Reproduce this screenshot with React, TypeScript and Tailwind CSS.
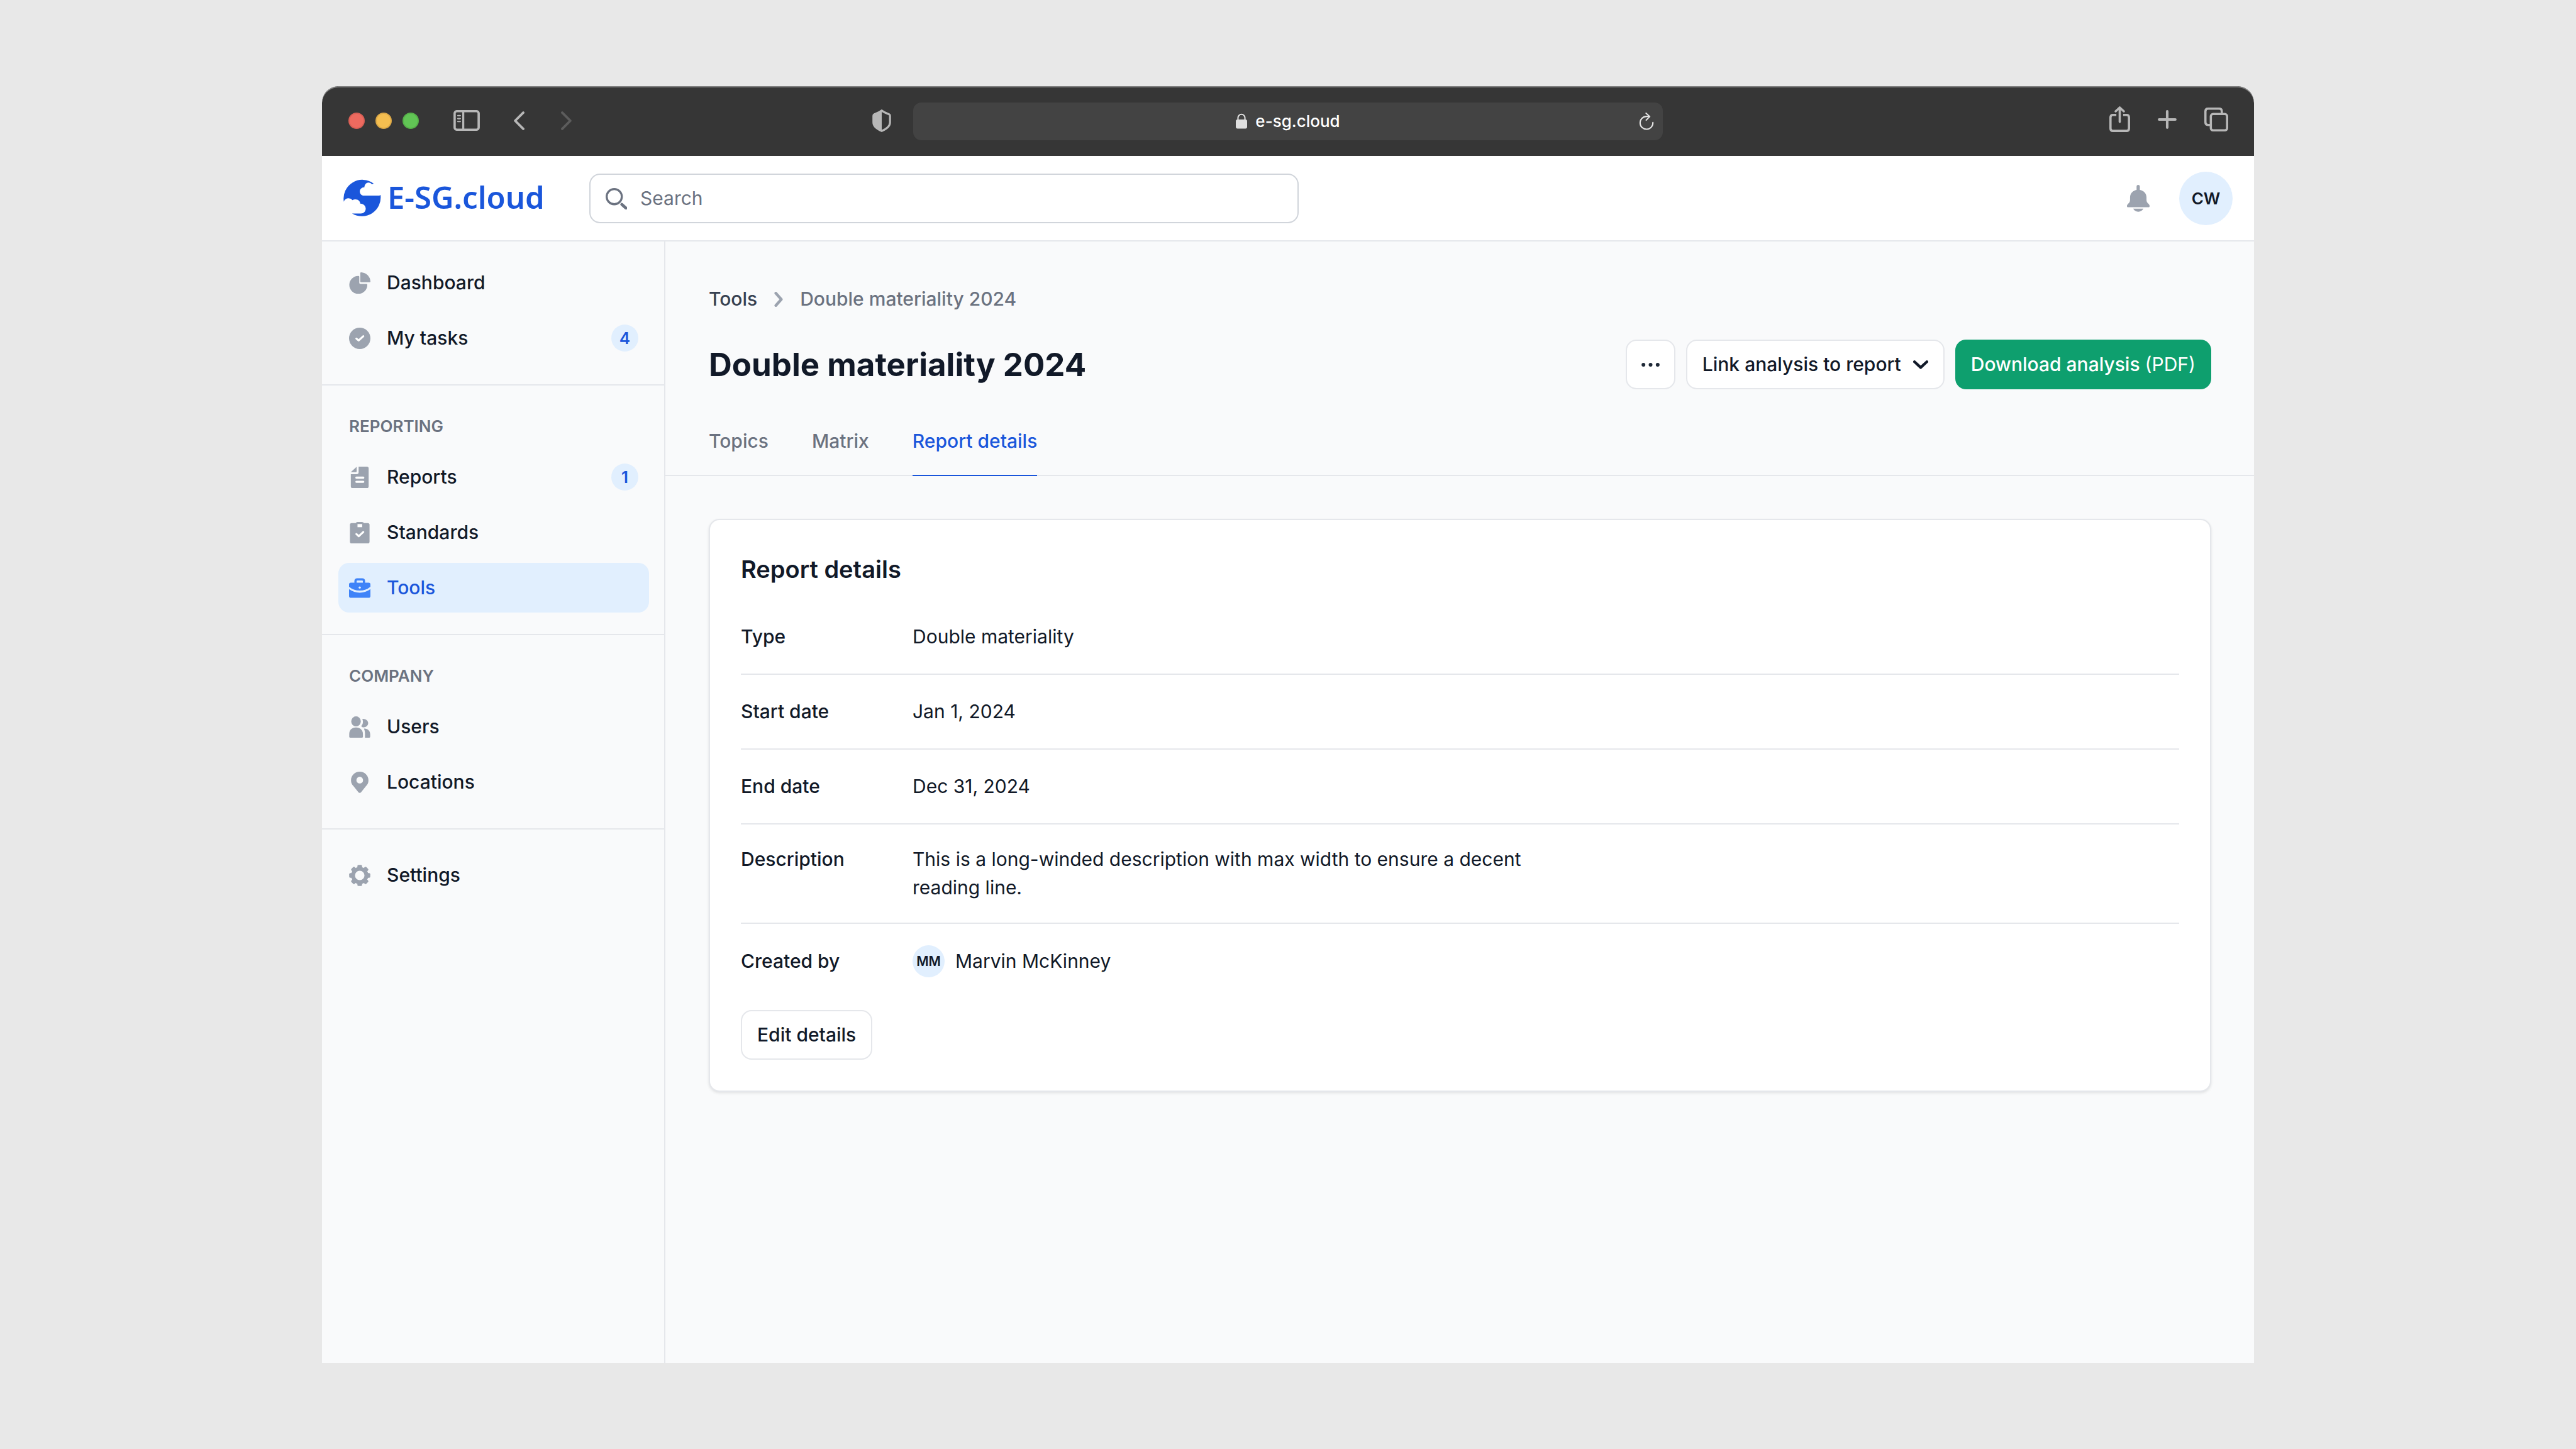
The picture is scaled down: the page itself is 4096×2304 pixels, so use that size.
import React from "react";

type IconProps = { className?: string };

function LogoMark() {
  return (
    <svg viewBox="25 19 255 254" className="size-[60px] shrink-0 fill-[#1a56db]" aria-hidden="true">
      <path d="M230 48A127 127 0 0 0 28 170C33 155 45 147 60 147Q76 147 87 160Q95 154 106 154C125 154 138 166 139 183C162 184 176 199 176 217C176 236 162 250 143 250H84A127 127 0 0 0 276 124Q272 129 266 129H163C147 129 136 116 136 101C136 86 149 73 167 73C168 54 180 41 195 41Q210 41 218 53Q224 50 230 48Z" />
    </svg>
  );
}

function SidebarToggleIcon() {
  return (
    <svg viewBox="0 0 60 47" className="h-[33px] w-[42px]" fill="none" stroke="#b7b7b7" aria-hidden="true">
      <rect x="2.7" y="2.5" width="54.6" height="42" rx="5" strokeWidth="5.2" />
      <path d="M22.3 2.5v42" strokeWidth="4.6" />
      <path d="M10 12.5h5.5M10 19.3h5.5M10 26h5.5" strokeWidth="3.2" strokeLinecap="round" />
    </svg>
  );
}

function ChevronLeft() {
  return (
    <svg viewBox="0 0 24 42" className="h-[30px] w-[17px]" fill="none" stroke="#b7b7b7" strokeWidth="5.4" strokeLinecap="round" strokeLinejoin="round" aria-hidden="true">
      <path d="M21.2 2.8 3 21l18.200 18.200" />
    </svg>
  );
}

function ChevronRightDim() {
  return (
    <svg viewBox="0 0 24 42" className="h-[30px] w-[17px]" fill="none" stroke="#5c5c5c" strokeWidth="5.4" strokeLinecap="round" strokeLinejoin="round" aria-hidden="true">
      <path d="M2.800 2.800 21 21 2.800 39.200" />
    </svg>
  );
}

function ShieldIcon() {
  return (
    <svg viewBox="0 0 42 51" className="h-[36px] w-[30px] shrink-0" aria-hidden="true">
      <path d="M21 2.500C16 6.500 10 9 4.500 11Q2.300 12 2.300 14V29C2.300 38 10 44 21 48.500C32 44 39.700 38 39.700 29V14Q39.700 12 37.500 11C32 9 26 6.500 21 2.500Z" fill="none" stroke="#b7b7b7" strokeWidth="4.500" />
      <path d="M21 2.500C16 6.500 10 9 4.500 11Q2.300 12 2.300 14V29C2.300 38 10 44 21 48.500Z" fill="#b7b7b7" />
    </svg>
  );
}

function LockIcon() {
  return (
    <svg viewBox="0 0 26 35" className="h-[25px] w-[18px]" aria-hidden="true">
      <rect x="0" y="14" width="26" height="21" rx="4" fill="#dfdfdf" />
      <path d="M5 16V10a8 8 0 0 1 16 0v6" fill="none" stroke="#dfdfdf" strokeWidth="3" />
    </svg>
  );
}

function ReloadIcon() {
  return (
    <svg viewBox="45 35 100 122" className="h-[29px] w-[24px]" fill="none" stroke="#e3e3e3" strokeWidth="8.500" strokeLinecap="round" strokeLinejoin="round" aria-hidden="true">
      <path d="M138 105A43 43 0 1 1 95 65H114" />
      <path d="M92 43 117 66 93 90" />
    </svg>
  );
}

function ShareIcon() {
  return (
    <svg viewBox="0 0 46 57" className="h-[41px] w-[33px]" fill="none" stroke="#b7b7b7" strokeWidth="5" aria-hidden="true">
      <path d="M15.500 19H8q-5.500 0-5.500 5.500V49q0 5.500 5.500 5.500h30q5.500 0 5.500-5.500V24.500q0-5.500-5.500-5.500h-7.500" />
      <path d="M23 3.500V34.500M14 11 23 2.700 32 11" strokeLinecap="round" strokeLinejoin="round" />
    </svg>
  );
}

function PlusIcon() {
  return (
    <svg viewBox="0 0 42 42" className="size-[30px]" fill="none" stroke="#b7b7b7" strokeWidth="5.800" strokeLinecap="round" aria-hidden="true">
      <path d="M21 3v36M3 21h36" />
    </svg>
  );
}

function WindowsIcon() {
  return (
    <svg viewBox="0 0 54 54" className="size-[38px]" fill="none" stroke="#b7b7b7" strokeWidth="5" aria-hidden="true">
      <rect x="14.700" y="14.700" width="36.800" height="36.800" rx="5" />
      <path d="M39.500 14V8.500q0-6-6-6h-25q-6 0-6 6v25q0 6 6 6H14" />
    </svg>
  );
}

function SearchIcon({ className }: IconProps) {
  return (
    <svg viewBox="129 120 144 144" className={className} fill="none" stroke="#6b7280" aria-hidden="true">
      <circle cx="187" cy="178" r="51" strokeWidth="14" />
      <path d="M238 230l30 27" strokeWidth="20" strokeLinecap="round" />
    </svg>
  );
}

function BellIcon() {
  return (
    <svg viewBox="465 731 153 182" className="h-[43px] w-[36px] fill-[#9ca3af]" aria-hidden="true">
      <path d="M530 742a11 11 0 0 1 22 0v23c26 5 45 24 45 49v16c0 14 4 19 12 27 6 6 9 10 9 16 0 6-2 9-7 9H472c-5 0-7-3-7-9 0-6 3-10 9-16 8-8 12-13 12-27v-16c0-25 19-44 44-49z" />
      <path d="M507 891h69c-6 13-19 21-34.500 21S513 904 507 891z" />
    </svg>
  );
}

const navIcon = "size-[34px] shrink-0";

function PieIcon() {
  return (
    <svg viewBox="0 0 48 48" className={navIcon} fill="currentColor" aria-hidden="true">
      <path d="M23 10q0-2.200-2.300-2A20.200 20.200 0 1 0 41 28q0-2-2-2H25.500q-2.500 0-2.500-2.500z" />
      <path d="M25.200 2q0-2 2-2A22 22 0 0 1 48 20q0 2.300-2 2.300H27.500q-2.300 0-2.300-2.300z" />
    </svg>
  );
}

function CheckCircleIcon() {
  return (
    <svg viewBox="0 0 48 48" className={navIcon} aria-hidden="true">
      <circle cx="24" cy="24" r="24" fill="currentColor" />
      <path d="M16.500 24.500l5 4.300L32 19.300" fill="none" stroke="#fff" strokeWidth="4.500" strokeLinecap="round" strokeLinejoin="round" />
    </svg>
  );
}

function ReportIcon() {
  return (
    <svg viewBox="0 0 48 48" className={navIcon} aria-hidden="true">
      <path d="M4 12.500 17 .500V11q0 1.500-1.500 1.500z" fill="currentColor" />
      <path d="M21.500 0H40q4 0 4 4V44q0 4-4 4H8q-4 0-4-4V17H17q4.500 0 4.500-4.500z" fill="currentColor" />
      <path d="M16.500 24.700h15.500M16.500 34h15.500" stroke="#fff" strokeWidth="4.800" strokeLinecap="round" />
    </svg>
  );
}

function ClipboardIcon() {
  return (
    <svg viewBox="0 0 48 48" className={navIcon} aria-hidden="true">
      <path d="M6 2.500H15Q16 0 19 0H29Q32 0 33.500 2.500H42q4 0 4 4V44q0 4-4 4H6q-4 0-4-4V6.500q0-4 4-4z" fill="currentColor" />
      <path d="M19 4.700h10.500v7H19z" fill="#fff" />
      <path d="M16.500 27l5.300 5L32 22.500" fill="none" stroke="#fff" strokeWidth="4.500" strokeLinecap="round" strokeLinejoin="round" />
    </svg>
  );
}

function BriefcaseIcon() {
  return (
    <svg viewBox="0 0 48 48" className={navIcon} aria-hidden="true">
      <path d="M14.500 13.500V8.500q0-4 4-4h11q4 0 4 4v5" fill="none" stroke="currentColor" strokeWidth="5" />
      <path d="M4 12H44q4 0 4 4v5Q38 29.500 24 29.500T0 21V16q0-4 4-4z" fill="currentColor" />
      <path d="M0 26.500Q11 34.500 24 34.500T48 26.500V42q0 4-4 4H4q-4 0-4-4z" fill="currentColor" />
      <circle cx="24" cy="23" r="2.500" fill="#e1effe" />
    </svg>
  );
}

function UsersIcon() {
  return (
    <svg viewBox="30 30 144 147" className={navIcon} fill="currentColor" aria-hidden="true">
      <ellipse cx="76.500" cy="65" rx="33" ry="34.500" />
      <path d="M30 151c0-26 18-44 44-44h5c26 0 45 19 45 44v18q0 8-8 8H38q-8 0-8-8z" />
      <path d="M120 47c22-2 40 12 40 30 0 17-14 29-30 29-7 0-13-2-18-9 13-14 15-31 8-50z" />
      <path d="M131 115c26-2 43 16 43 40v14q0 8-8 8H138v-26c0-15-2-26-7-36z" />
    </svg>
  );
}

function PinIcon() {
  return (
    <svg viewBox="30 399 144 147" className={navIcon} aria-hidden="true">
      <path fillRule="evenodd" fill="currentColor" d="M102 399c33 0 60 26 60 59 0 18-7 30-18 42l-32 40c-5 7-15 7-20 0l-32-40c-11-12-18-24-18-42 0-33 27-59 60-59zM102 434a23 23 0 1 0 0 46 23 23 0 0 0 0-46z" />
    </svg>
  );
}

function GearIcon() {
  return (
    <svg viewBox="-72 -73 144 146" className={navIcon} aria-hidden="true">
      <circle r="45.500" fill="none" stroke="currentColor" strokeWidth="26" />
      {[0, 45, 90, 135, 180, 225, 270, 315].map((a) => (
        <rect key={a} x="-16" y="-72" width="32" height="26" rx="8" fill="currentColor" transform={`rotate(${a})`} />
      ))}
    </svg>
  );
}

type NavItemProps = { icon: React.ReactNode; label: string; badge?: string; active?: boolean };

function NavItem({ icon, label, badge, active }: NavItemProps) {
  return (
    <li>
      <a
        href="#"
        aria-current={active ? "page" : undefined}
        className={
          active
            ? "flex h-[79px] items-center gap-[26px] rounded-[17px] bg-[#e1effe] px-[17px] text-[#1a56db]"
            : "flex h-[79px] items-center gap-[26px] rounded-[17px] px-[17px] text-[#111928]"
        }
      >
        <span className={active ? "text-[#3f83f8]" : "text-[#9ca3af]"}>{icon}</span>
        <span className="grow">{label}</span>
        {badge && (
          <span className="flex size-[43px] items-center justify-center rounded-full bg-[#e1effe] text-[26px] font-semibold text-[#1a56db]">
            {badge}
          </span>
        )}
      </a>
    </li>
  );
}

function NavGroup({ title, children }: { title?: string; children: React.ReactNode }) {
  return (
    <section className="border-b-2 border-[#e5e7eb] pt-[33px] pr-[24px] pb-[34px] pl-[26px] first:pt-[26px] last:border-b-0">
      {title && (
        <h2 className="mb-[9px] px-[17px] text-[26px] leading-[64px] font-semibold text-[#6b7280]">{title}</h2>
      )}
      <ul className="flex flex-col gap-[9px]">{children}</ul>
    </section>
  );
}

function DetailRow({ label, children, top, last }: { label: string; children: React.ReactNode; top?: boolean; last?: boolean }) {
  return (
    <div
      className={`flex py-[33px] ${top ? "items-start" : "min-h-[119px] items-center"} ${last ? "" : "border-b-2 border-[#e5e7eb]"}`}
    >
      <dt className="w-[273px] shrink-0 font-medium">{label}</dt>
      <dd className="max-w-[1024px]">{children}</dd>
    </div>
  );
}

const outlineButton =
  "flex h-[79px] items-center justify-center rounded-[17px] border-2 border-[#e5e7eb] bg-white font-medium text-[#111928]";

export default function App() {
  return (
    <div className="flex min-h-screen flex-col bg-[#e8e8e8] px-[12.5%] py-[137px] font-['Inter',sans-serif] text-[30px] leading-[45px] text-[#111928]">
      <div className="flex grow flex-col overflow-hidden rounded-t-[26px] bg-[#f9fafb]">
        <div className="grid h-[111px] grid-cols-[1fr_minmax(0,1192px)_1fr] items-center rounded-t-[26px] bg-[#363636] shadow-[inset_0_2px_0_#7f7f7f]">
          <div className="flex items-center pr-[35px] pb-0.5 pl-[42px]">
            <div className="flex gap-[17px]">
              <span className="size-[26px] rounded-full border-2 border-[#d85f55] bg-[#ed6a5f]" />
              <span className="size-[26px] rounded-full border-2 border-[#dba847] bg-[#f4be50]" />
              <span className="size-[26px] rounded-full border-2 border-[#57b14a] bg-[#61c555]" />
            </div>
            <button type="button" aria-label="Toggle sidebar" className="ml-[55px]">
              <SidebarToggleIcon />
            </button>
            <button type="button" aria-label="Back" className="ml-[54px]">
              <ChevronLeft />
            </button>
            <button type="button" aria-label="Forward" className="ml-[58px] mr-auto">
              <ChevronRightDim />
            </button>
            <ShieldIcon />
          </div>
          <div className="flex h-[60px] items-center rounded-[13px] bg-[#434343] px-[14px]">
            <span className="w-[24px]" />
            <div className="flex grow items-center justify-center gap-[13px] text-[26px] font-medium text-white">
              <LockIcon />
              <span>e-sg.cloud</span>
            </div>
            <button type="button" aria-label="Reload">
              <ReloadIcon />
            </button>
          </div>
          <div className="flex items-center justify-end gap-[44px] pr-[41px] pb-1.5">
            <button type="button" aria-label="Share"><ShareIcon /></button>
            <button type="button" aria-label="New tab"><PlusIcon /></button>
            <button type="button" aria-label="Show all tabs"><WindowsIcon /></button>
          </div>
        </div>

        <header className="flex h-[136px] items-center border-b-2 border-[#e5e7eb] bg-white pr-[34px]">
          <a href="#" className="flex w-[425px] shrink-0 items-center gap-[10px] pl-[34px] font-['Noto_Sans',sans-serif] text-[49px] leading-[60px] font-semibold text-[#1a56db]">
            <LogoMark />
            <span className="pb-1">E-SG.cloud</span>
          </a>
          <label className="relative w-full max-w-[1128px]">
            <SearchIcon className="absolute top-[23px] left-[26px] size-[34px]" />
            <input
              type="search"
              aria-label="Search"
              placeholder="Search"
              className="block h-[79px] w-full rounded-[17px] border-2 border-[#d1d5db] bg-white pr-[26px] pl-[79px] placeholder:text-[#6b7280]"
            />
          </label>
          <div className="ml-auto flex items-center gap-[47px]">
            <button type="button" aria-label="Notifications"><BellIcon /></button>
            <button type="button" className="flex size-[85px] items-center justify-center rounded-full bg-[#e1effe] text-[26px] font-semibold">
              CW
            </button>
          </div>
        </header>

        <div className="flex grow">
          <nav className="w-[546px] shrink-0 border-r-2 border-[#e5e7eb] font-medium">
            <NavGroup>
              <NavItem icon={<PieIcon />} label="Dashboard" />
              <NavItem icon={<CheckCircleIcon />} label="My tasks" badge="4" />
            </NavGroup>
            <NavGroup title="REPORTING">
              <NavItem icon={<ReportIcon />} label="Reports" badge="1" />
              <NavItem icon={<ClipboardIcon />} label="Standards" />
              <NavItem icon={<BriefcaseIcon />} label="Tools" active />
            </NavGroup>
            <NavGroup title="COMPANY">
              <NavItem icon={<UsersIcon />} label="Users" />
              <NavItem icon={<PinIcon />} label="Locations" />
            </NavGroup>
            <NavGroup>
              <NavItem icon={<GearIcon />} label="Settings" />
            </NavGroup>
          </nav>

          <main className="min-w-0 grow pt-[69px]">
            <div className="pr-[68px] pl-[69px]">
              <nav aria-label="Breadcrumb" className="flex items-center font-medium">
                <a href="#" className="text-[#374151]">Tools</a>
                <svg viewBox="0 0 18 33" className="mx-[27px] h-[24px] w-[14px]" fill="none" stroke="#9ca3af" strokeWidth="6" strokeLinecap="round" strokeLinejoin="round" aria-hidden="true">
                  <path d="M3 3 15 16.500 3 30" />
                </svg>
                <span className="text-[#6b7280]">Double materiality 2024</span>
              </nav>
              <div className="mt-[42px] flex items-center gap-[17px]">
                <h1 className="mr-auto text-[51px] leading-[64px] font-bold [font-optical-sizing:none]">Double materiality 2024</h1>
                <button type="button" aria-label="More actions" className={`${outlineButton} w-[79px]`}>
                  <svg viewBox="0 0 43 9" className="h-[6px] w-[31px] fill-[#1f2937]" aria-hidden="true">
                    <circle cx="4.500" cy="4.500" r="4.500" />
                    <circle cx="21.500" cy="4.500" r="4.500" />
                    <circle cx="38.500" cy="4.500" r="4.500" />
                  </svg>
                </button>
                <button type="button" className={`${outlineButton} gap-[19px] px-[24px]`}>
                  Link analysis to report
                  <svg viewBox="0 0 33 19" className="h-[14px] w-[24px]" fill="none" stroke="#111928" strokeWidth="6" strokeLinecap="round" strokeLinejoin="round" aria-hidden="true">
                    <path d="M3 3 16.500 15.500 30 3" />
                  </svg>
                </button>
                <button type="button" className="h-[79px] rounded-[17px] bg-[#0e9f6e] px-[25px] font-medium text-white">
                  Download analysis <span className="font-normal">(PDF)</span>
                </button>
              </div>
            </div>

            <div className="mt-[26px] flex gap-[69px] border-b-2 border-[#e5e7eb] px-[69px] font-medium text-[#6b7280]" role="tablist">
              <button type="button" role="tab" className="pt-[34px] pb-[31px]">Topics</button>
              <button type="button" role="tab" className="pt-[34px] pb-[31px]">Matrix</button>
              <button type="button" role="tab" aria-selected="true" className="-mb-0.5 border-b-2 border-[#1a56db] pt-[34px] pb-[31px] text-[#1a56db]">
                Report details
              </button>
            </div>

            <section className="mr-[68px] ml-[69px] mt-[68px] rounded-[17px] border-2 border-[#e5e7eb] bg-white p-[49px] shadow-[0_2px_4px_rgba(0,0,0,0.1)]">
              <h2 className="mb-[20px] text-[38px] leading-[58px] font-semibold [font-optical-sizing:none]">Report details</h2>
              <dl>
                <DetailRow label="Type">Double materiality</DetailRow>
                <DetailRow label="Start date">Jan 1, 2024</DetailRow>
                <DetailRow label="End date">Dec 31, 2024</DetailRow>
                <DetailRow label="Description" top>
                  This is a long-winded description with max width to ensure a decent reading line.
                </DetailRow>
                <DetailRow label="Created by" last>
                  <span className="flex items-center gap-[17px]">
                    <span className="flex size-[51px] items-center justify-center rounded-full bg-[#e1effe] text-[21px] font-semibold">
                      MM
                    </span>
                    Marvin McKinney
                  </span>
                </DetailRow>
              </dl>
              <button type="button" className={`${outlineButton} mt-[18px] px-[24px]`}>Edit details</button>
            </section>
          </main>
        </div>
      </div>
    </div>
  );
}
